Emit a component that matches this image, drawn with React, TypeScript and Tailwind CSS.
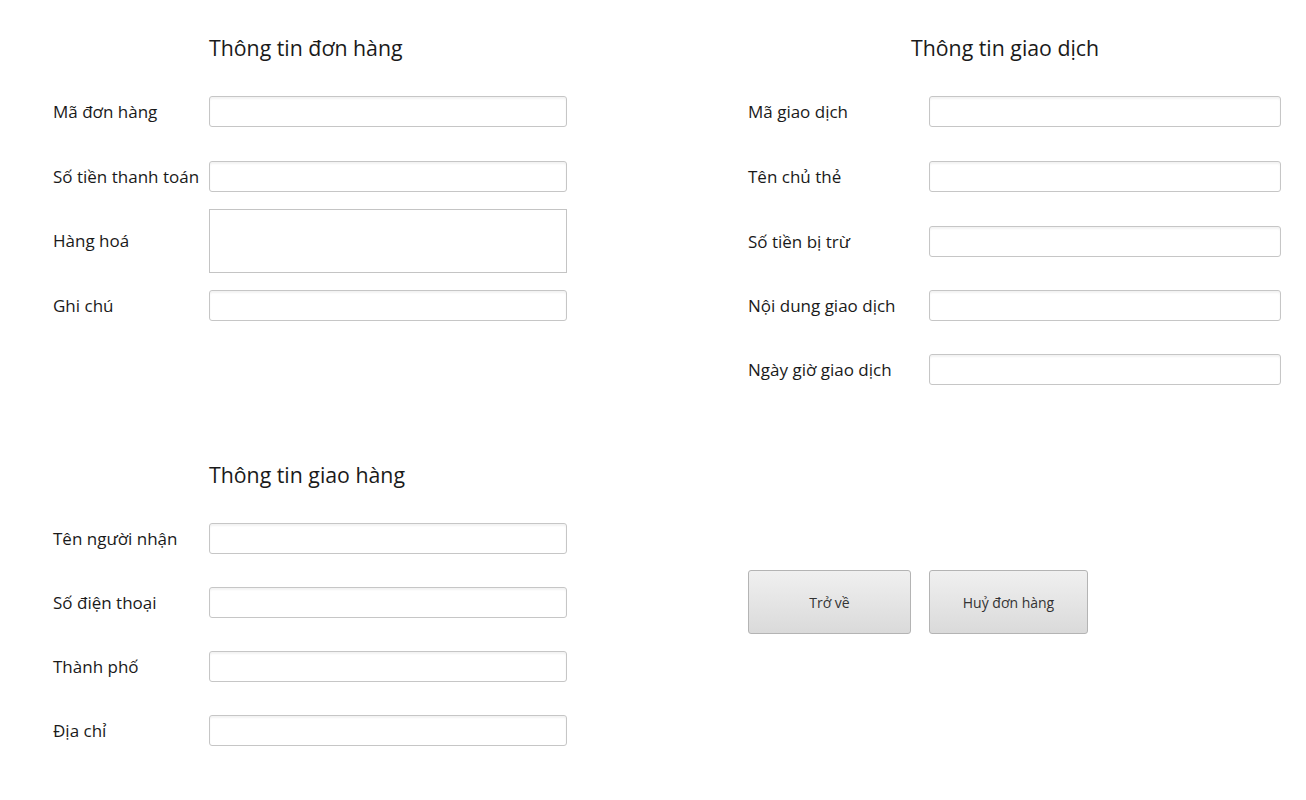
import { FunctionComponent } from 'react';

const font = { fontFamily: '"Open Sans", "Noto Sans", sans-serif' };

interface IField {
  label: string;
  labelWidth: string;
  inputWidth: string;
  tall?: boolean;
  className?: string;
}

const Field: FunctionComponent<IField> = ({ label, labelWidth, inputWidth, tall, className }) => (
  <div className={`flex items-center ${className ?? ''}`}>
    <label className={`${labelWidth} shrink-0 text-[17px] text-[#1a1a1a] whitespace-nowrap`}>{label}</label>
    {tall ? (
      <textarea className={`${inputWidth} h-[64px] resize-none border border-[#c4c4c4] bg-white outline-none`} />
    ) : (
      <input
        type="text"
        className={`${inputWidth} h-[31px] rounded-[3px] border border-[#c6c6c6] bg-white shadow-[inset_0_2px_2px_rgba(0,0,0,0.05)] outline-none`}
      />
    )}
  </div>
);

const Title: FunctionComponent<{ text: string; className?: string }> = ({ text, className }) => (
  <h2 className={`h-[28px] text-[21.3px] leading-[28px] text-[#1a1a1a] ${className ?? ''}`}>{text}</h2>
);

const left = { labelWidth: 'w-[156px]', inputWidth: 'w-[358px]' };
const right = { labelWidth: 'w-[181px]', inputWidth: 'w-[352px]' };

const App = (): JSX.Element => {
  return (
    <div className="flex h-[800px] w-[1306px] bg-white" style={font}>
      {/* cột trái */}
      <div className="ml-[53px] flex w-[514px] flex-col pt-[34px]">
        <Title text="Thông tin đơn hàng" className="ml-[156px]" />
        <Field label="Mã đơn hàng" {...left} className="mt-[34px]" />
        <Field label="Số tiền thanh toán" {...left} className="mt-[34px]" />
        <Field label="Hàng hoá" {...left} tall className="mt-[17px]" />
        <Field label="Ghi chú" {...left} className="mt-[17px]" />

        <Title text="Thông tin giao hàng" className="ml-[156px] mt-[140px]" />
        <Field label="Tên người nhận" {...left} className="mt-[34px]" />
        <Field label="Số điện thoại" {...left} className="mt-[33px]" />
        <Field label="Thành phố" {...left} className="mt-[33px]" />
        <Field label="Địa chỉ" {...left} className="mt-[33px]" />
      </div>

      {/* cột phải */}
      <div className="ml-[181px] flex w-[533px] flex-col pt-[34px]">
        <Title text="Thông tin giao dịch" className="ml-[163px]" />
        <Field label="Mã giao dịch" {...right} className="mt-[34px]" />
        <Field label="Tên chủ thẻ" {...right} className="mt-[34px]" />
        <Field label="Số tiền bị trừ" {...right} className="mt-[34px]" />
        <Field label="Nội dung giao dịch" {...right} className="mt-[33px]" />
        <Field label="Ngày giờ giao dịch" {...right} className="mt-[33px]" />

        <div className="mt-[185px] flex gap-[18px]">
          <button className="h-[64px] w-[163px] rounded-[3px] border border-[#b4b4b4] bg-gradient-to-b from-[#f0f0f0] to-[#dadada] text-[14px] text-[#333]">
            Trở về
          </button>
          <button className="h-[64px] w-[159px] rounded-[3px] border border-[#b4b4b4] bg-gradient-to-b from-[#f0f0f0] to-[#dadada] text-[14px] text-[#333]">
            Huỷ đơn hàng
          </button>
        </div>
      </div>
    </div>
  );
};

export default App;
